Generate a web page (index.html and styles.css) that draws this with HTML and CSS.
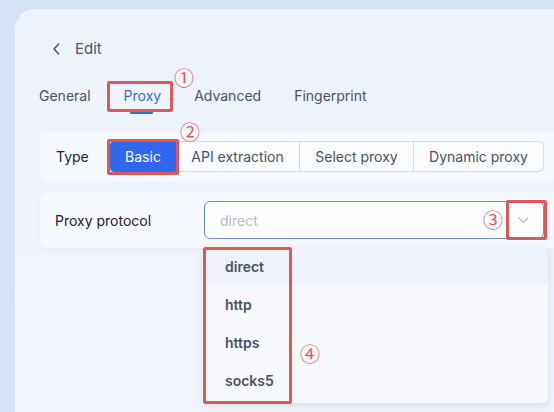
FILE: index.html
```html
<!DOCTYPE html>
<html>
<head>
<meta charset="utf-8">
<link rel="stylesheet" href="styles.css">
</head>
<body>
<div class="page">
  <div class="card">
    <div class="header">
      <svg class="back" width="9" height="12" viewBox="0 0 9 12"><path d="M6.5 1.2 L2 6 L6.5 10.8" fill="none" stroke="#4f5564" stroke-width="1.6" stroke-linecap="round" stroke-linejoin="round"/></svg>
      <span class="title">Edit</span>
    </div>
    <div class="tabs">
      <div class="tab">General</div>
      <div class="tab active">Proxy</div>
      <div class="tab">Advanced</div>
      <div class="tab">Fingerprint</div>
    </div>
    <div class="panel type-panel">
      <div class="type-label">Type</div>
      <div class="segments">
        <div class="seg seg-basic on">Basic</div>
        <div class="seg seg-api">API extraction</div>
        <div class="seg seg-select">Select proxy</div>
        <div class="seg seg-dyn">Dynamic proxy</div>
      </div>
    </div>
    <div class="panel proto-panel">
      <div class="proto-label">Proxy protocol</div>
      <div class="select">
        <span class="placeholder">direct</span>
        <svg class="caret" width="11" height="7" viewBox="0 0 11 7"><path d="M1 1 L5.5 5.5 L10 1" fill="none" stroke="#b3b8c2" stroke-width="1.1" stroke-linecap="round" stroke-linejoin="round"/></svg>
        <div class="dropdown">
          <div class="opt hover">direct</div>
          <div class="opt">http</div>
          <div class="opt">https</div>
          <div class="opt">socks5</div>
        </div>
      </div>
    </div>
  </div>

  <div class="mark box-proxy"></div>
  <div class="mark box-basic"></div>
  <div class="mark box-caret"></div>
  <div class="mark box-opts"></div>
  <div class="num n1">①</div>
  <div class="num n2">②</div>
  <div class="num n3">③</div>
  <div class="num n4">④</div>
</div>
</body>
</html>
```

FILE: styles.css
```css
* { box-sizing: border-box; }
html, body { margin: 0; padding: 0; }
body {
  width: 554px;
  height: 412px;
  overflow: hidden;
  background: #d5e2f3;
  font-family: Inter, "Noto Sans", sans-serif;
}
.page {
  position: relative;
  width: 554px;
  height: 412px;
  padding: 9px 0 0 15px;
}
.card {
  height: 403px;
  background: linear-gradient(180deg, #eef3fb 0%, #eff4fb 60%, #f1f5fb 100%);
  border-radius: 20px 0 0 0;
  padding: 30px 0 0 25px;
}
.header {
  display: flex;
  align-items: center;
  height: 20px;
  padding-left: 12px;
}
.back { display: block; margin-right: 14px; }
.title { font-size: 15px; color: #4f5564; line-height: 20px; }

.tabs {
  display: flex;
  gap: 33px;
  margin-top: 27px;
  margin-left: -1px;
}
.tab {
  font-size: 14px;
  line-height: 20px;
  color: #4b5161;
  padding-bottom: 8px;
  position: relative;
}
.tab.active { color: #3b6ad6; }
.tab.active::after {
  content: "";
  position: absolute;
  left: 50%;
  bottom: 0;
  width: 23px;
  height: 2px;
  margin-left: -12px;
  background: #3b6ad6;
  border-radius: 1px;
}

.panel {
  display: flex;
  align-items: center;
  background: #f5f8fd;
  border-radius: 8px 0 0 8px;
}
.type-panel {
  margin-top: 18px;
  height: 49px;
  padding-left: 16px;
}
.type-label { width: 54px; font-size: 14px; color: #1f2329; }
.segments { display: flex; height: 31px; }
.seg {
  display: flex;
  align-items: center;
  justify-content: center;
  font-size: 14px;
  color: #4b5161;
  background: #fafbfd;
  border: 1px solid #d6dbe4;
  border-left: none;
}
.seg-basic { width: 66px; }
.seg-api { width: 124px; }
.seg-select { width: 114px; }
.seg-dyn { width: 130px; }
.seg:first-child { border-radius: 4px 0 0 4px; border-left: 1px solid #d6dbe4; }
.seg:last-child { border-radius: 0 6px 6px 0; }
.seg.on { background: #3366ef; border-color: #3366ef; color: #ffffff; }

.proto-panel {
  margin-top: 11px;
  height: 56px;
  padding-left: 15px;
  box-shadow: 0 2px 6px rgba(170,185,210,0.12);
}
.proto-label { width: 149px; font-size: 14px; color: #1f2329; }
.select {
  position: relative;
  width: 340px;
  height: 38px;
  border: 1px solid #6d8bc4;
  border-radius: 6px;
  background: #fbfcfe;
  display: flex;
  align-items: center;
  padding-left: 15px;
}
.placeholder { font-size: 14px; color: #b9bdc5; }
.caret { position: absolute; right: 14px; top: 15px; }
.dropdown {
  position: absolute;
  left: -1px;
  top: 45px;
  width: 344px;
  height: 156px;
  background: #f6f8fc;
  border-radius: 6px;
  box-shadow: 0 3px 10px rgba(150,165,190,0.28);
  padding-bottom: 4px;
  overflow: hidden;
}
.opt {
  height: 38px;
  display: flex;
  align-items: center;
  padding-left: 21px;
  font-size: 14px;
  font-weight: 600;
  color: #4b5263;
}
.opt.hover { background: #eef3fb; }

.mark {
  position: absolute;
  border: 3px solid #e0575b;
  border-radius: 2px;
}
.box-proxy { left: 107px; top: 81px; width: 66px; height: 31px; }
.box-basic { left: 107px; top: 139px; width: 72px; height: 36px; }
.box-caret { left: 506px; top: 200px; width: 41px; height: 40px; }
.box-opts { left: 203px; top: 247px; width: 89px; height: 157px; }
.num {
  position: absolute;
  width: 22px;
  height: 22px;
  line-height: 22px;
  text-align: center;
  font-family: "Noto Sans CJK SC", sans-serif;
  font-size: 20px;
  color: #e0575b;
}
.n1 { left: 173px; top: 67px; }
.n2 { left: 179px; top: 121px; }
.n3 { left: 482px; top: 209px; }
.n4 { left: 299px; top: 343px; }
```
